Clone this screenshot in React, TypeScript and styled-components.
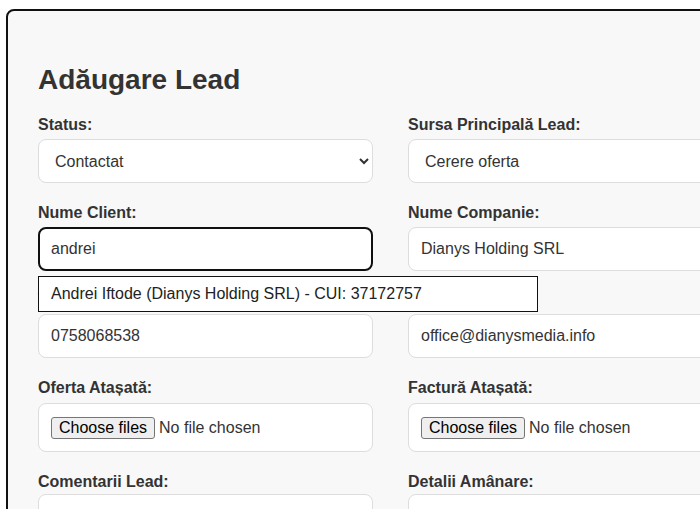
import React, { useEffect, useRef, useState } from "react";
import styled, { createGlobalStyle, css } from "styled-components";

const GlobalStyle = createGlobalStyle`
  html, body {
    margin: 0;
    background: #ffffff;
    overflow: hidden;
  }
  body {
    padding: 9px 0 0 6px;
    font-family: "Liberation Sans", Arial, Helvetica, sans-serif;
    color: #333;
  }
  * { box-sizing: border-box; }
`;

const Card = styled.div`
  width: max-content;
  border: 2px solid #111;
  border-radius: 8px;
  background: #f8f8f8;
  padding: 30px;
`;

const Title = styled.h2`
  margin: 23px 0 20px;
  font-size: 28px;
  font-weight: bold;
  line-height: normal;
  color: #333;
`;

const FormGrid = styled.div`
  display: grid;
  grid-template-columns: 335px 335px;
  column-gap: 35px;
  row-gap: 20.7px;
`;

const Field = styled.div`
  position: relative;
  display: flex;
  flex-direction: column;
`;

const Label = styled.label<{ $space?: number }>`
  display: block;
  font-size: 16px;
  font-weight: bold;
  line-height: 18px;
  color: #333;
  margin-bottom: ${(p) => (p.$space ?? 5)}px;
`;

const controlBase = css`
  display: block;
  width: 100%;
  padding: 12px;
  font-family: inherit;
  font-size: 16px;
  color: #333;
  background: #fff;
  border: 1px solid #ddd;
  border-radius: 8px;
  outline: none;
`;

const Select = styled.select`
  ${controlBase}
  height: 44px;
  padding: 0 8px 0 12px;
`;

const TextInput = styled.input<{ $focused?: boolean }>`
  ${controlBase}
  height: 44px;
  ${(p) =>
    p.$focused &&
    css`
      border: 2px solid #101010;
      padding: 11px;
    `}
`;

/* File picker: bordered box holding the button and the chosen-file text */
const FileBox = styled.div`
  ${controlBase}
  display: flex;
  align-items: center;
  gap: 4px;
  height: 49px;
  padding: 0 12px;
  color: #333;
`;

const FileButton = styled.label`
  display: inline-flex;
  align-items: center;
  height: 22px;
  padding: 0 7px;
  font-size: 16px;
  color: #000;
  background: #efefef;
  border: 1px solid #767676;
  border-radius: 3px;
  cursor: default;
`;

const HiddenFile = styled.input`
  display: none;
`;

const FileName = styled.span`
  font-size: 16px;
  color: #333;
  white-space: nowrap;
`;

const TextArea = styled.textarea`
  ${controlBase}
  height: 80px;
  resize: vertical;
`;

const InputWrap = styled.div`
  position: relative;
`;

const Suggestions = styled.ul`
  position: absolute;
  z-index: 5;
  left: 0;
  top: calc(100% + 5px);
  width: 500px;
  margin: 0;
  padding: 0;
  list-style: none;
  background: #fff;
  border: 1px solid #111;
`;

const SuggestionItem = styled.li`
  padding: 8px 12px;
  font-size: 16px;
  line-height: 18px;
  color: #222;
  cursor: pointer;
`;

function FilePicker({ id }: { id: string }) {
  const [names, setNames] = useState<string>("");
  return (
    <FileBox>
      <FileButton htmlFor={id}>Choose files</FileButton>
      <HiddenFile
        id={id}
        type="file"
        multiple
        onChange={(e) => {
          const files = e.target.files;
          if (!files || files.length === 0) setNames("");
          else if (files.length === 1) setNames(files[0].name);
          else setNames(`${files.length} files`);
        }}
      />
      <FileName>{names || "No file chosen"}</FileName>
    </FileBox>
  );
}

export default function App() {
  const clientRef = useRef<HTMLInputElement>(null);

  useEffect(() => {
    const el = clientRef.current;
    if (el) {
      el.focus();
      const len = el.value.length;
      el.setSelectionRange(len, len);
    }
  }, []);

  return (
    <>
      <GlobalStyle />
      <Card>
        <Title>Adăugare Lead</Title>
        <FormGrid>
          <Field>
            <Label htmlFor="status">Status:</Label>
            <Select id="status" defaultValue="contactat">
              <option value="nou">Nou</option>
              <option value="contactat">Contactat</option>
              <option value="ofertat">Ofertat</option>
            </Select>
          </Field>
          <Field>
            <Label htmlFor="sursa">Sursa Principală Lead:</Label>
            <Select id="sursa" defaultValue="cerere">
              <option value="cerere">Cerere oferta</option>
              <option value="telefon">Telefon</option>
            </Select>
          </Field>

          <Field>
            <Label htmlFor="client">Nume Client:</Label>
            <InputWrap>
              <TextInput
                id="client"
                ref={clientRef}
                $focused
                defaultValue="andrei"
                autoComplete="off"
              />
              <Suggestions>
                <SuggestionItem>
                  Andrei Iftode (Dianys Holding SRL) - CUI: 37172757
                </SuggestionItem>
              </Suggestions>
            </InputWrap>
          </Field>
          <Field>
            <Label htmlFor="companie">Nume Companie:</Label>
            <TextInput id="companie" defaultValue="Dianys Holding SRL" />
          </Field>

          <Field>
            <Label htmlFor="telefon">Telefon:</Label>
            <TextInput id="telefon" defaultValue="0758068538" />
          </Field>
          <Field>
            <Label htmlFor="email">Email:</Label>
            <TextInput id="email" defaultValue="office@dianysmedia.info" />
          </Field>

          <Field>
            <Label htmlFor="oferta" $space={6}>
              Oferta Atașată:
            </Label>
            <FilePicker id="oferta" />
          </Field>
          <Field>
            <Label htmlFor="factura" $space={6}>
              Factură Atașată:
            </Label>
            <FilePicker id="factura" />
          </Field>

          <Field>
            <Label htmlFor="comentarii" $space={3}>
              Comentarii Lead:
            </Label>
            <TextArea id="comentarii" />
          </Field>
          <Field>
            <Label htmlFor="amanare" $space={3}>
              Detalii Amânare:
            </Label>
            <TextArea id="amanare" />
          </Field>
        </FormGrid>
      </Card>
    </>
  );
}
